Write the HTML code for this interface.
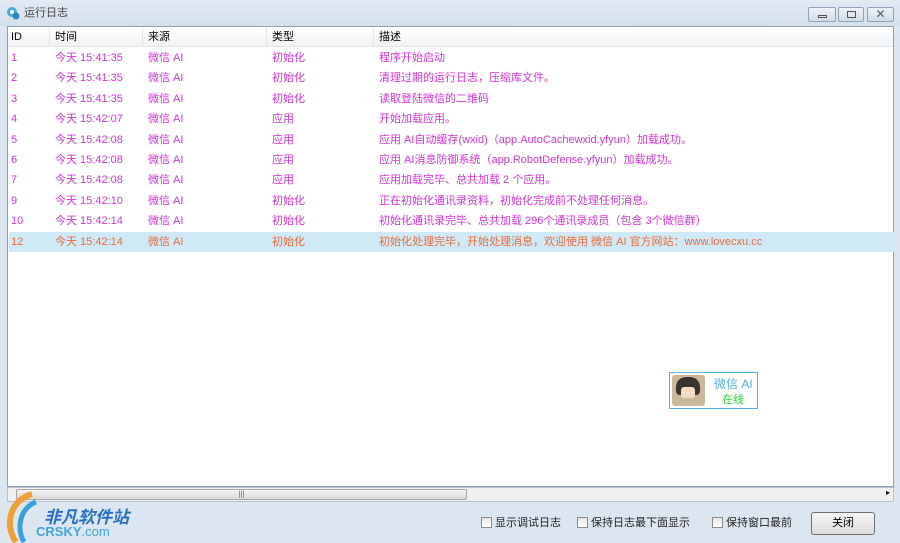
<!DOCTYPE html><html><head><meta charset="utf-8"><style>
*{margin:0;padding:0;box-sizing:border-box}
body{width:900px;height:543px;overflow:hidden;background:#dce6f0;font-family:"Liberation Sans","Noto Sans CJK SC",sans-serif;font-size:11px;position:relative}
.title{position:absolute;left:0;top:0;width:900px;height:26px;background:linear-gradient(#e2eaf3,#d4e0ec)}
.title span{position:absolute;left:24px;top:6px;font-size:11px;line-height:14px;color:#444}
.btn{position:absolute;top:7px;height:15px;border:1px solid #8fa3b8;border-radius:2px;background:linear-gradient(#eef3f8,#d0dbe7)}
.list{position:absolute;left:7px;top:26px;width:887px;height:461px;background:#fff;border:1px solid #8da0b5}
.hdr{position:absolute;left:0;top:0;width:100%;height:20px;background:linear-gradient(#fff,#f1f3f5);border-bottom:1px solid #e2e5e8}
.c{position:absolute;white-space:nowrap;line-height:14px}
.row{position:absolute;left:1px;width:885px;height:20px;color:#d334d6}
.row .c,.hdr .c{top:3px}
.sep{position:absolute;top:0;width:1px;height:20px;background:#e4e6ea}
.hs{position:absolute;left:7px;top:487px;width:887px;height:15px;background:#f0f0f0;border:1px solid #b8c2cc}
.bot{position:absolute;left:0;top:502px;width:900px;height:41px;background:#dce6f0}
.cb{position:absolute;top:516px;font-size:11px;line-height:14px;color:#222}
.cb i{display:inline-block;width:11px;height:11px;border:1px solid #8a8a8a;background:linear-gradient(#e6e6e6,#fff);vertical-align:-2px;margin-right:3px}
</style></head><body>
<div class="title"><svg style="position:absolute;left:6px;top:6px" width="14" height="14"><circle cx="6" cy="6" r="5" fill="#4aa8e0"/><circle cx="10" cy="10" r="3.5" fill="#2b86c8"/><circle cx="6" cy="6" r="2" fill="#fff"/></svg><span>运行日志</span>
<div class="btn" style="left:808px;width:28px"><div style="position:absolute;left:9px;top:7px;width:9px;height:3px;border:1px solid #555"></div></div>
<div class="btn" style="left:838px;width:26px"><div style="position:absolute;left:8px;top:3px;width:9px;height:7px;border:1px solid #555"></div></div>
<div class="btn" style="left:867px;width:27px;text-align:center;font-size:12px;line-height:13px;color:#555">✕</div>
</div>
<div class="list">
<div class="hdr"><span class="c" style="left:3px">ID</span><span class="sep" style="left:41px"></span><span class="c" style="left:47px">时间</span><span class="sep" style="left:134px"></span><span class="c" style="left:140px">来源</span><span class="sep" style="left:258px"></span><span class="c" style="left:264px">类型</span><span class="sep" style="left:365px"></span><span class="c" style="left:371px">描述</span></div>
<div class="row" style="top:21px"><span class="c" style="left:2px">1</span><span class="c" style="left:46px">今天 15:41:35</span><span class="c" style="left:139px">微信 AI</span><span class="c" style="left:263px">初始化</span><span class="c" style="left:370px">程序开始启动</span></div>
<div class="row" style="top:41.4px"><span class="c" style="left:2px">2</span><span class="c" style="left:46px">今天 15:41:35</span><span class="c" style="left:139px">微信 AI</span><span class="c" style="left:263px">初始化</span><span class="c" style="left:370px">清理过期的运行日志，压缩库文件。</span></div>
<div class="row" style="top:61.8px"><span class="c" style="left:2px">3</span><span class="c" style="left:46px">今天 15:41:35</span><span class="c" style="left:139px">微信 AI</span><span class="c" style="left:263px">初始化</span><span class="c" style="left:370px">读取登陆微信的二维码</span></div>
<div class="row" style="top:82.2px"><span class="c" style="left:2px">4</span><span class="c" style="left:46px">今天 15:42:07</span><span class="c" style="left:139px">微信 AI</span><span class="c" style="left:263px">应用</span><span class="c" style="left:370px">开始加载应用。</span></div>
<div class="row" style="top:102.6px"><span class="c" style="left:2px">5</span><span class="c" style="left:46px">今天 15:42:08</span><span class="c" style="left:139px">微信 AI</span><span class="c" style="left:263px">应用</span><span class="c" style="left:370px">应用 AI自动缓存(wxid)（app.AutoCachewxid.yfyun）加载成功。</span></div>
<div class="row" style="top:123px"><span class="c" style="left:2px">6</span><span class="c" style="left:46px">今天 15:42:08</span><span class="c" style="left:139px">微信 AI</span><span class="c" style="left:263px">应用</span><span class="c" style="left:370px">应用 AI消息防御系统（app.RobotDefense.yfyun）加载成功。</span></div>
<div class="row" style="top:143.4px"><span class="c" style="left:2px">7</span><span class="c" style="left:46px">今天 15:42:08</span><span class="c" style="left:139px">微信 AI</span><span class="c" style="left:263px">应用</span><span class="c" style="left:370px">应用加载完毕、总共加载 2 个应用。</span></div>
<div class="row" style="top:163.8px"><span class="c" style="left:2px">9</span><span class="c" style="left:46px">今天 15:42:10</span><span class="c" style="left:139px">微信 AI</span><span class="c" style="left:263px">初始化</span><span class="c" style="left:370px">正在初始化通讯录资料，初始化完成前不处理任何消息。</span></div>
<div class="row" style="top:184.2px"><span class="c" style="left:2px">10</span><span class="c" style="left:46px">今天 15:42:14</span><span class="c" style="left:139px">微信 AI</span><span class="c" style="left:263px">初始化</span><span class="c" style="left:370px">初始化通讯录完毕、总共加载 296个通讯录成员（包含 3个微信群）</span></div>
<div class="row" style="top:204.6px;background:#d0e9f6;color:#ec6a3a"><span class="c" style="left:2px">12</span><span class="c" style="left:46px">今天 15:42:14</span><span class="c" style="left:139px">微信 AI</span><span class="c" style="left:263px">初始化</span><span class="c" style="left:370px">初始化处理完毕，开始处理消息，欢迎使用 微信 AI 官方网站：www.lovecxu.cc</span></div>
<div style="position:absolute;left:661px;top:345px;width:89px;height:37px;border:1px solid #4fb3e8;background:#fff">
<div style="position:absolute;left:2px;top:2px;width:33px;height:31px;background:#c9b89a;border-radius:3px"><div style="position:absolute;left:4px;top:2px;width:24px;height:18px;background:#3b342e;border-radius:10px 10px 4px 4px"></div><div style="position:absolute;left:9px;top:12px;width:14px;height:11px;background:#f4dcc4;border-radius:3px"></div></div>
<span class="c" style="left:44px;top:4px;color:#5aaee0;font-size:12px">微信 AI</span><span class="c" style="left:52px;top:20px;color:#30d030">在线</span></div>
</div>
<div class="hs"><div style="position:absolute;left:8px;top:1px;width:451px;height:11px;background:linear-gradient(#f4f4f4,#d9d9d9);border:1px solid #a8a8a8;border-radius:2px;text-align:center;font-size:7px;line-height:9px;color:#555">|||</div><span style="position:absolute;right:3px;top:0;font-size:8px">▸</span></div>
<div class="bot"></div>
<div style="position:absolute;left:0;top:490px;width:145px;height:53px">
<svg width="40" height="53" style="position:absolute;left:2px;top:0"><path d="M30 4 C8 10 2 35 14 52" stroke="#f0a030" stroke-width="6" fill="none"/><path d="M34 12 C18 18 14 38 22 52" stroke="#3a9ee0" stroke-width="5" fill="none"/></svg>
<span style="position:absolute;left:44px;top:13px;font-size:17px;font-weight:bold;font-style:italic;color:#2a70c8">非凡软件站</span>
<span style="position:absolute;left:36px;top:34px;font-size:13px;font-weight:bold;color:#3da4e0">CRSKY<span style="font-weight:normal">.com</span></span></div>
<div class="cb" style="left:481px"><i></i>显示调试日志</div>
<div class="cb" style="left:577px"><i></i>保持日志最下面显示</div>
<div class="cb" style="left:712px"><i></i>保持窗口最前</div>
<div style="position:absolute;left:811px;top:512px;width:64px;height:23px;border:1px solid #707070;border-radius:3px;background:linear-gradient(#f6f6f6,#dcdcdc);text-align:center;line-height:21px;font-size:11px">关闭</div>
</body></html>
